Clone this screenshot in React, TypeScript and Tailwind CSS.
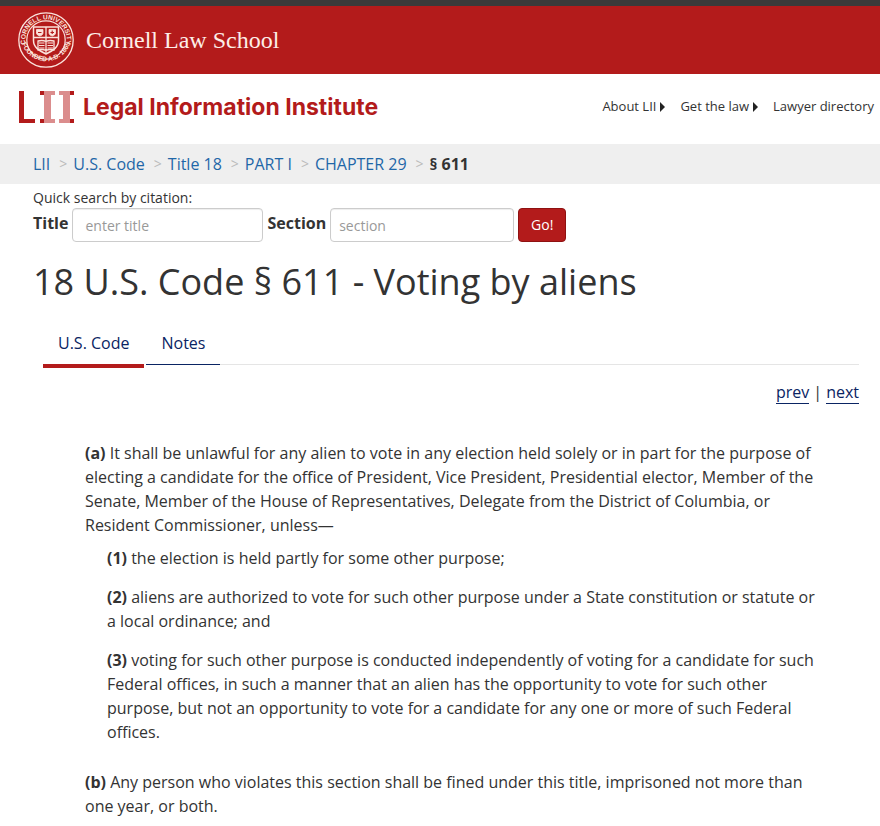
import { useId } from "react";
import type { ReactNode } from "react";

const NAV_LINKS = [
  { label: "About LII", hasMenu: true },
  { label: "Get the law", hasMenu: true },
  { label: "Lawyer directory", hasMenu: false },
];

const CRUMBS = ["LII", "U.S. Code", "Title 18", "PART I", "CHAPTER 29"];

function CornellSeal() {
  const id = useId();
  return (
    <svg
      className="h-14 w-14 shrink-0"
      viewBox="0 0 56 56"
      fill="none"
      stroke="#fbe3dc"
      role="img"
      aria-label="Cornell University seal"
    >
      <defs>
        <path id={`${id}-top`} d="M12 41.200A20.700 20.700 0 1 1 44 41.200" />
        <path id={`${id}-bottom`} d="M2.700 26A25.400 25.400 0 0 0 53.300 26" />
      </defs>
      <circle cx="28" cy="28" r="27.200" strokeWidth="1.300" />
      <circle cx="28" cy="28" r="19.200" strokeWidth="1.200" />
      <g fill="#fbe3dc" stroke="none" fontFamily="Liberation Sans, Arial, sans-serif" fontWeight="700" fontSize="6.600">
        <text textAnchor="middle">
          <textPath href={`#${id}-top`} startOffset="50%">CORNELL UNIVERSITY</textPath>
        </text>
        <text textAnchor="middle">
          <textPath href={`#${id}-bottom`} startOffset="50%">FOUNDED A.D. 1865</textPath>
        </text>
      </g>

      {/* Shield */}
      <path d="M15.500 15h25v13.500c0 6.500-5 10-12.500 13.500-7.500-3.500-12.500-7-12.500-13.500z" strokeWidth="1.500" />
      <path d="M15.500 25.500h25M28 15v10.500" strokeWidth="1.300" />
      <path d="M18.500 17.500h6.500v3.500c0 1.500-1.500 2.500-3.200 3-1.700-.5-3.300-1.500-3.300-3zM31 17.500h6.500v3.500c0 1.500-1.500 2.500-3.200 3-1.700-.5-3.300-1.500-3.300-3z" fill="#fbe3dc" strokeWidth=".8" />
      <path d="M20 20.500h3.500M34.200 18.500v3.500M32.500 20.500h3.500" stroke="#b31b1b" strokeWidth="1.100" />

      {/* Open book */}
      <path d="M20 29c3-.8 5.500-.8 8 .5 2.500-1.300 5-1.300 8-.5v9c-3-.8-5.500-.8-8 .5-2.500-1.300-5-1.300-8-.5zM28 26v16" strokeWidth="1.300" />
      <path d="M21 31h5.500M21 33.500h5.500M21 36h5.500M29.500 31h5.500M29.500 33.500h5.500M29.500 36h5.500" strokeWidth="1.100" />
    </svg>
  );
}

function LiiMark() {
  return (
    <svg className="h-8 w-14 shrink-0" viewBox="0 0 56 32" aria-hidden="true">
      <path d="M0 0h5v28h11v4H0z" fill="#b31b1b" />
      <path d="M21 0h15v4h-4v24h4v4H21v-4h4V4h-4zM40 0h15v4h-4v24h4v4H40v-4h4V4h-4z" fill="#db8d8d" />
      <path d="M21 0h4v4h-4zM21 28h4v4h-4zM51 0h4v4h-4zM51 28h4v4h-4z" fill="#b31b1b" />
    </svg>
  );
}

function Paragraph({ mark, children }: { mark: string; children: ReactNode }) {
  return (
    <p>
      <strong>{mark}</strong> {children}
    </p>
  );
}

export default function App() {
  return (
    <div className="min-h-screen bg-white font-['Open_Sans',sans-serif] text-base text-[#333]">
      <header>
        <div className="flex items-center gap-3 border-t-6 border-[#3a3a3a] bg-[#b31b1b] px-[18px] py-[6px]">
          <CornellSeal />
          <a href="#cornell" className="font-['Liberation_Serif',serif] text-2xl text-[#fdeee8]">
            Cornell Law School
          </a>
        </div>
        <div className="flex h-[70px] items-center justify-between pr-[6px] pb-1 pl-[19px]">
          <a href="#home" className="flex items-center gap-2 text-[#b31b1b]">
            <LiiMark />
            <span className="font-['Inter',sans-serif] text-[23px] font-bold">Legal Information Institute</span>
          </a>
          <nav className="flex items-center gap-[14px] text-[13px]">
            {NAV_LINKS.map((link) => (
              <a key={link.label} href="#menu" className="flex items-center gap-1">
                {link.label}
                {link.hasMenu && (
                  <svg className="h-[10px] w-[6px]" viewBox="0 0 6 10" aria-hidden="true">
                    <path d="M0 0l5 5-5 5z" fill="#222" />
                  </svg>
                )}
              </a>
            ))}
          </nav>
        </div>
      </header>

      <nav aria-label="Breadcrumb" className="bg-[#efefef] px-[33px] py-2">
        <ol className="flex">
          {CRUMBS.map((crumb) => (
            <li key={crumb} className="flex">
              <a href="#crumb" className="text-[#1f67a8]">{crumb}</a>
              <span className="pr-[6px] pl-[9px] text-sm leading-6 text-[#bbb]">&gt;</span>
            </li>
          ))}
          <li className="font-bold">§ 611</li>
        </ol>
      </nav>

      <main className="pr-[21px] pl-[33px]">
        <form onSubmit={(e) => e.preventDefault()}>
          <p className="pt-1 text-sm leading-5">Quick search by citation:</p>
          <div className="flex items-start gap-1">
            <label htmlFor="cite-title" className="pt-[3px] font-bold">Title</label>
            <input
              id="cite-title"
              placeholder="enter title"
              className="h-[34px] w-[191px] rounded border border-[#ccc] px-3 text-sm shadow-[inset_0_1px_1px_#eee] placeholder:text-[#999]"
            />
            <label htmlFor="cite-section" className="pt-[3px] font-bold">Section</label>
            <input
              id="cite-section"
              placeholder="section"
              className="h-[34px] w-[184px] rounded border border-[#ccc] px-2 text-sm shadow-[inset_0_1px_1px_#eee] placeholder:text-[#999]"
            />
            <button type="submit" className="h-[34px] w-12 rounded border border-[#8f1111] bg-[#b31b1b] text-sm text-white">
              Go!
            </button>
          </div>
        </form>

        <h1 className="pt-4 text-4xl leading-12">18 U.S. Code § 611 - Voting by aliens</h1>

        <div role="tablist" className="mt-[22px] ml-[10px] flex gap-[2px] text-[#0a2463]">
          <button role="tab" aria-selected="true" className="h-10 border-b-4 border-[#b31b1b] px-[15px] pb-[6px]">
            U.S. Code
          </button>
          <button role="tab" aria-selected="false" className="h-[37px] border-b border-[#0a2463] px-[15px] pb-[6px]">
            Notes
          </button>
          <div className="-ml-[2px] h-[37px] flex-1 border-b border-[#e5e5e5]" />
        </div>

        <div className="flex justify-end gap-1 pt-[13px] leading-[22px]">
          <a href="#prev" className="border-b border-[#0a2463] text-[#0a2463]">prev</a>
          <span>|</span>
          <a href="#next" className="border-b border-[#0a2463] text-[#0a2463]">next</a>
        </div>

        <article className="pt-[37px] pr-10 pb-2 pl-[52px]">
          <Paragraph mark="(a)">
            It shall be unlawful for any alien to vote in any election held solely or in part for the purpose of
            electing a candidate for the office of President, Vice President, Presidential elector, Member of the
            Senate, Member of the House of Representatives, Delegate from the District of Columbia, or Resident
            Commissioner, unless—
          </Paragraph>
          <div className="flex flex-col gap-[15px] pt-[9px] pb-[26px] pl-[22px]">
            <Paragraph mark="(1)">the election is held partly for some other purpose;</Paragraph>
            <Paragraph mark="(2)">
              aliens are authorized to vote for such other purpose under a State constitution or statute or a local
              ordinance; and
            </Paragraph>
            <Paragraph mark="(3)">
              voting for such other purpose is conducted independently of voting for a candidate for such Federal
              offices, in such a manner that an alien has the opportunity to vote for such other purpose, but not an
              opportunity to vote for a candidate for any one or more of such Federal offices.
            </Paragraph>
          </div>
          <Paragraph mark="(b)">
            Any person who violates this section shall be fined under this title, imprisoned not more than one year,
            or both.
          </Paragraph>
        </article>
      </main>
    </div>
  );
}
